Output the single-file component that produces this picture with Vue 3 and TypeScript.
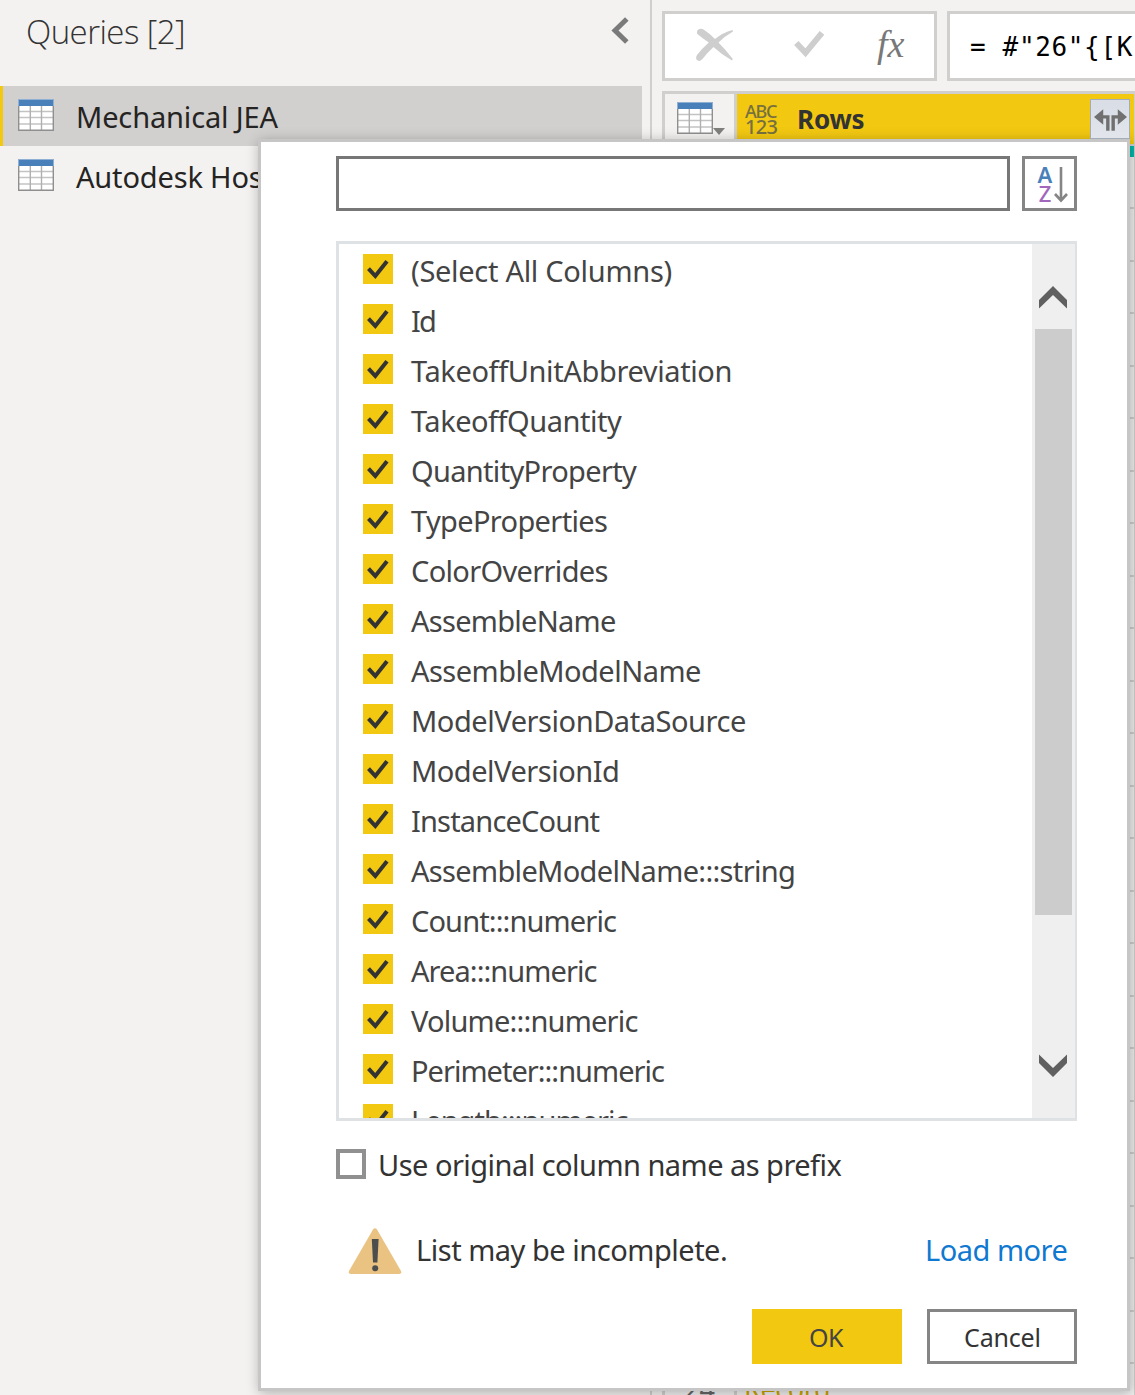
<script setup lang="ts">
import { ref } from 'vue'

interface Column { name: string; width: number }

// Each width is the drawn extent of the label, from its origin to its last glyph edge.
const columns: Column[] = [
  { name: '(Select All Columns)', width: 260.5 },
  { name: 'Id', width: 24 },
  { name: 'TakeoffUnitAbbreviation', width: 319.5 },
  { name: 'TakeoffQuantity', width: 211 },
  { name: 'QuantityProperty', width: 226 },
  { name: 'TypeProperties', width: 196 },
  { name: 'ColorOverrides', width: 196.5 },
  { name: 'AssembleName', width: 204 },
  { name: 'AssembleModelName', width: 289 },
  { name: 'ModelVersionDataSource', width: 334 },
  { name: 'ModelVersionId', width: 207 },
  { name: 'InstanceCount', width: 188.5 },
  { name: 'AssembleModelName:::string', width: 383 },
  { name: 'Count:::numeric', width: 205 },
  { name: 'Area:::numeric', width: 185.5 },
  { name: 'Volume:::numeric', width: 226.5 },
  { name: 'Perimeter:::numeric', width: 253 },
  { name: 'Length:::numeric', width: 216.5 },
]
const queries = [
  { name: 'Mechanical JEA', width: 202.5, active: true },
  { name: 'Autodesk Hosted', width: 229, active: false },
]
const rows = Array.from({ length: 24 }, (_, i) => ({ id: i + 1, shown: i === 23 }))
const search = ref('')

// Adjusts tracking so that a label occupies the given width.
const vFit = {
  mounted(el: HTMLElement, binding: { value: number }) {
    const text = (el.textContent ?? '').trim()
    const ctx = document.createElement('canvas').getContext('2d')
    if (!ctx || text.length < 2) return
    const s = getComputedStyle(el)
    ctx.font = `${s.fontWeight} ${s.fontSize} ${s.fontFamily}`
    const right = ctx.measureText(text).actualBoundingBoxRight
    el.style.letterSpacing = `${(binding.value - right) / (text.length - 1)}px`
  },
}
</script>

<template>
  <div class="app">
    <svg width="0" height="0" class="defs">
      <symbol id="table-icon" viewBox="0 0 36 32">
        <rect x=".5" y=".5" width="35" height="31" fill="#fff" />
        <path d="M1 12.5H35M1 18.5H35M1 25H35" stroke="#c3c3c3" stroke-width="1.4" />
        <path d="M12.3 7V31M23.5 7V31" stroke="#b0b0b0" stroke-width="1.4" />
        <path d="M.7 6V31.2H35.3V6" fill="none" stroke="#8f8f8f" stroke-width="1.4" />
        <rect width="36" height="7" fill="#4a80ba" />
        <path d="M0 .5H36M.5 0V7M35.5 0V7" stroke="#8fb0d3" />
      </symbol>
    </svg>

    <aside class="sidebar">
      <header class="side-head">
        <h1><span v-fit="157">Queries [2]</span></h1>
        <svg class="collapse" width="18" height="27" viewBox="0 0 18 27"><path d="M15.8 2 4 13.5 15.8 25" fill="none" stroke="#7a7a7a" stroke-width="5" /></svg>
      </header>
      <div v-for="q in queries" :key="q.name" class="query" :class="{ active: q.active }">
        <svg width="36" height="32"><use href="#table-icon" /></svg>
        <span v-fit="q.width">{{ q.name }}</span>
      </div>
    </aside>

    <main class="main">
      <div class="formula-row">
        <div class="tools">
          <svg class="x" width="38" height="34" viewBox="0 0 38 34"><path d="M1.4 6C-.5 2 4-.8 7.600 1.500Q13 5 19 11Q27 4.500 36.500 2L37 3.500Q29 8 22.500 14.500Q30 22 36.800 31L36 32.500Q26 27 17.500 19Q11 25 6.500 31Q3 34.500.5 31.500Q-.5 29.500 1 27Q6 20.500 12.800 14.500Q6 10 1.400 6Z" fill="#cecece" /></svg>
          <svg class="tick" width="30" height="28" viewBox="0 0 30 28"><path d="M2.300 13 11.500 22.800 28 2.800" fill="none" stroke="#cecece" stroke-width="6" /></svg>
          <span class="fx">fx</span>
        </div>
        <div class="formula">= #"26"{[K</div>
      </div>
      <div class="grid">
        <div class="grid-head">
          <div class="corner">
            <svg width="36" height="32"><use href="#table-icon" /></svg>
            <svg class="caret" width="12" height="7" viewBox="0 0 12 7"><path d="M0 0H12L6 7Z" fill="#7f7f7b" /></svg>
          </div>
          <div class="col-head">
            <span class="type"><span v-fit="32">ABC</span><span v-fit="32.5">123</span></span>
            <b><span v-fit="66.5">Rows</span></b>
          </div>
        </div>
        <div class="progress"></div>
        <div v-for="r in rows" :key="r.id" class="row">
          <span class="num"><template v-if="r.shown">{{ r.id }}</template></span>
          <span class="rec"><span v-if="r.shown" v-fit="85">Record</span></span>
        </div>
      </div>
    </main>

    <section class="dialog">
      <div class="search-row">
        <input v-model="search" type="text" />
        <button class="sort">
          <span class="az"><span class="a">A</span><span class="z">Z</span></span>
          <svg width="14" height="36" viewBox="0 0 14 36"><path d="M7 0V33M1 27 7 33.500 13 27" fill="none" stroke="#858585" stroke-width="2.600" /></svg>
        </button>
      </div>
      <div class="list">
        <div class="items">
          <label v-for="c in columns" :key="c.name" class="item">
            <svg width="30" height="30" viewBox="0 0 30 30"><rect width="30" height="30" fill="#f2c811" /><path d="M5.500 14.700 12.300 22 24 7.200" fill="none" stroke="#333" stroke-width="4" /></svg>
            <span v-fit="c.width">{{ c.name }}</span>
          </label>
        </div>
        <div class="scroll">
          <svg class="up" width="28" height="23" viewBox="0 0 28 23"><path d="M0 14 14 0 28 14V22.500L14 9 0 22.500Z" fill="#606060" /></svg>
          <div class="thumb"></div>
          <svg class="down" width="28" height="23" viewBox="0 0 28 23"><path d="M0 9 14 23 28 9V.5L14 14 0 .5Z" fill="#606060" /></svg>
        </div>
      </div>
      <label class="prefix"><span class="box"></span><span v-fit="463.5">Use original column name as prefix</span></label>
      <div class="notice">
        <svg width="54" height="48" viewBox="0 0 54 48"><path d="M25 2.500Q27 0 29 2.500L53 44Q54 47 51 47H3Q0 47 1 44Z" fill="#eac282" /><path d="M23.800 12H30.600L29.400 35.500H25Z" fill="#4d4d4d" /><circle cx="27.200" cy="41.200" r="3" fill="#4d4d4d" /></svg>
        <span class="msg"><span v-fit="310">List may be incomplete.</span></span>
        <a><span v-fit="141.5">Load more</span></a>
      </div>
      <footer>
        <button class="ok"><span v-fit="35">OK</span></button>
        <button class="cancel"><span v-fit="75.5">Cancel</span></button>
      </footer>
    </section>

    <div class="expand">
      <svg width="33" height="22" viewBox="0 0 34 22"><path d="M0 8 9.500 0V6.200H16V22H12.500V9.500H9.500V16Z M34 8 24.500 0V6.200H18V22H21.500V9.500H24.500V16Z" fill="#707070" /></svg>
    </div>
  </div>
</template>

<style>
body { margin: 0; }
</style>

<style scoped>
.app { position: relative; display: flex; width: 1135px; height: 1395px; overflow: hidden; background: #f3f2f0; font: 29px "Noto Sans", "Open Sans", sans-serif; color: #252423; white-space: nowrap; }
.app * { box-sizing: border-box; }
.defs { position: absolute; }
svg { display: block; flex: none; }
.sidebar { flex: none; width: 652px; border-right: 2px solid #d0cfcd; }
.side-head { display: flex; justify-content: space-between; height: 86px; padding: 0 21px 0 26px; }
h1 { margin: 0; font: 300 33px/64px "Open Sans", "Noto Sans", sans-serif; color: #333; }
.collapse { margin-top: 17px; }
.query { display: flex; align-items: center; width: 642px; height: 60px; padding-left: 18px; line-height: 60px; }
.query svg { margin: -2px 22px 0 0; }
.query > span { padding-top: 2px; }
.query.active { background: #d1d0ce; box-shadow: inset 3px 0 #f2c811; }
.main { flex: none; width: 483px; padding: 11px 0 0 10px; }
.formula-row { display: flex; gap: 10px; height: 80px; }
.tools { display: flex; flex: none; width: 275px; height: 70px; border: 3px solid #d0cfcd; background: #fff; }
.x { margin: 14px 0 0 31px; }
.tick { margin: 16px 0 0 60px; }
.fx { margin: 8px 0 0 53px; font: italic 38px/44px "Liberation Serif", serif; color: #787878; }
.formula { flex: none; width: 188px; height: 70px; padding-left: 20px; border: 3px solid #d0cfcd; border-right: 0; background: #fff; font: 26px/67px "DejaVu Sans Mono", monospace; letter-spacing: .65px; color: #000; }
.grid { width: 475px; border: 3px solid #d0cfcd; border-bottom: 0; }
.grid-head { display: flex; height: 52px; border-bottom: 2px solid #d0cfcd; }
.corner { display: flex; flex: none; width: 72px; padding: 8px 0 0 12px; border-right: 3px solid #d0cfcd; }
.caret { margin: 26px 0 0 0; }
.col-head { display: flex; width: 397px; background: #f2c811; }
.type { width: 60px; padding: 9px 0 0 8px; font-size: 18px; line-height: 16px; color: #77703f; font-weight: 500; }
.type > span { display: block; }
.type > span + span { font-size: 20px; line-height: 15px; }
.col-head b { font-size: 26px; line-height: 51px; color: #333; }
.progress { height: 10.5px; background: #01b8aa; }
.row { display: flex; height: 52.5px; border-bottom: 2.5px solid #d0cfcd; background: #f0f0f0; font-size: 27px; line-height: 50px; }
.num { width: 72px; padding-right: 19px; border-right: 3px solid #d0cfcd; text-align: right; color: #666; }
.rec { padding-left: 7px; color: #cca300; }
.dialog { position: absolute; left: 258px; top: 139px; width: 872px; height: 1252px; padding: 14px 50px 0 75px; border: 3px solid #c6c6c6; background: #fff; box-shadow: 1px 2px 12px rgba(0, 0, 0, .28); color: #333; }
.search-row { display: flex; justify-content: space-between; }
input { width: 674px; height: 55px; margin: 0; border: 3px solid #777; outline: 0; background: #fff; }
button { display: flex; padding: 0; border: 0; font: 25px "Noto Sans", sans-serif; color: #333; }
.sort { width: 55px; height: 55px; border: 3px solid #858585; background: #fff; }
.az { width: 18px; margin: 6px 0 0 11px; font-size: 22px; line-height: 19px; font-weight: 600; }
.az span { display: block; text-align: center; }
.a { color: #4a80ba; }
.z { color: #a067bb; font-weight: 500; }
.sort svg { margin: 8px 0 0 0; }
.list { display: flex; justify-content: space-between; width: 741px; height: 880px; margin-top: 30px; border: 3px solid #dfe2e5; border-right-width: 2px; overflow: hidden; }
.items { padding-left: 24px; color: #444; }
.item { display: flex; align-items: center; height: 50px; line-height: 50px; }
.item span { margin-left: 18px; padding-top: 3px; }
.scroll { display: flex; flex-direction: column; align-items: center; width: 43px; height: 875px; padding-top: 42px; background: #efefef; }
.scroll svg { margin-right: 1px; }
.thumb { width: 37px; height: 586px; margin: 20px 0 139px; background: #ccc; }
.prefix { display: flex; height: 30px; margin-top: 28px; line-height: 32px; }
.box { width: 30px; height: 30px; margin-right: 12px; border: 4px solid #909090; }
.notice { display: flex; height: 48px; margin: 48px 0 0 12px; line-height: 46px; }
.msg { flex: none; width: 523px; padding-left: 14px; }
.notice a { color: #0f78d0; }
footer { display: flex; justify-content: space-between; width: 325px; margin: 34px 0 0 416px; }
footer button { width: 150px; height: 55px; line-height: 57px; }
.ok { padding-left: 57px; background: #f2c811; color: #444; }
.cancel { padding-left: 34px; border: 3px solid #858585; background: #fff; line-height: 51px; }
.expand { position: absolute; left: 1090px; top: 99px; width: 40px; height: 40px; padding: 9px 0 0 3px; border: 1px solid #a3adb9; background: linear-gradient(#d8dde6, #e2e5eb); }
</style>
